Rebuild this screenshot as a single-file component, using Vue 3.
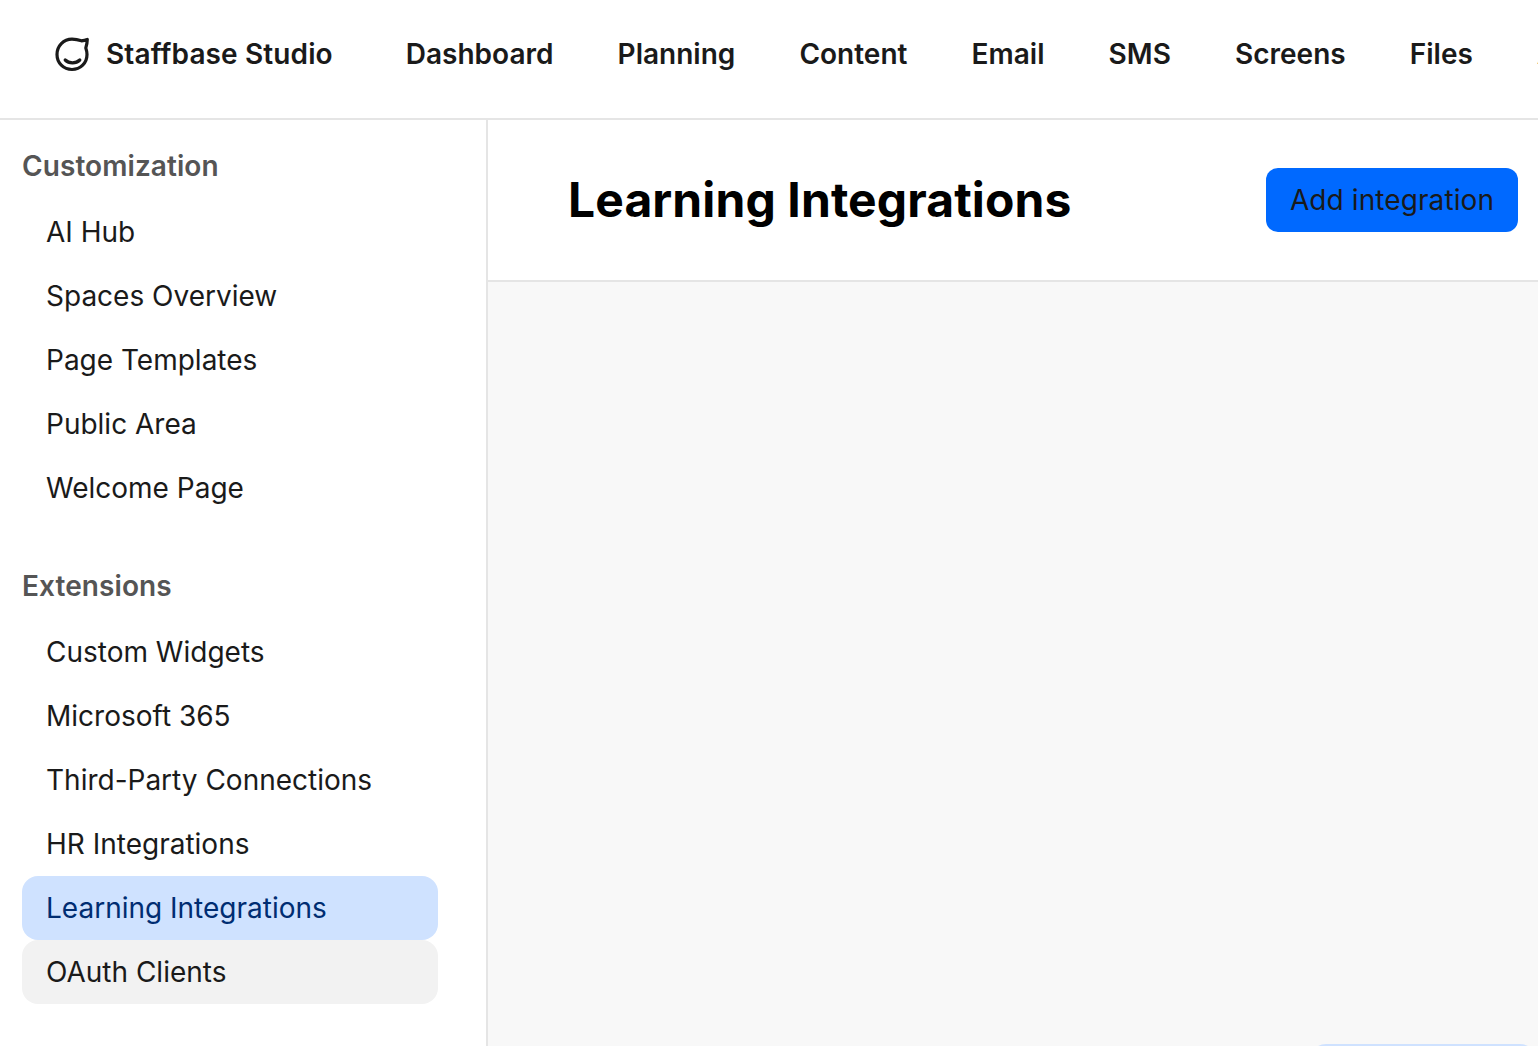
<script setup>
const nav = ['Dashboard', 'Planning', 'Content', 'Email', 'SMS', 'Screens', 'Files', 'Analytics']
const groups = [
  { title: 'Customization', items: ['AI Hub', 'Spaces Overview', 'Page Templates', 'Public Area', 'Welcome Page'] },
  { title: 'Extensions', items: ['Custom Widgets', 'Microsoft 365', 'Third-Party Connections', 'HR Integrations', 'Learning Integrations', 'OAuth Clients'] }
]
const itemClass = (name) => ({
  active: name === 'Learning Integrations',
  hover: name === 'OAuth Clients'
})
</script>

<template>
  <div class="page">
    <header class="topbar">
      <div class="brand">
        <svg class="logo" width="40" height="40" viewBox="0 0 40 40" fill="none" stroke="#1a1a1a" stroke-width="3.2" stroke-linecap="round" stroke-linejoin="round">
          <path d="M29.5 6.8C26.5 5.8 23.5 5.2 20 5.2C11.5 5.2 5 12 5 20.5C5 29 11.5 35.5 20 35.5C28.5 35.5 35 29 35 20.5C35 18 34.5 16 33.8 14C34.8 11 35.2 8.5 35.3 5.4C33.2 6.2 31.4 6.6 29.5 6.8Z" />
          <path d="M13.2 26C17 29.8 24 29.8 27.8 26" />
        </svg>
        <span class="brand-name">Staffbase Studio</span>
      </div>
      <nav class="nav">
        <a v-for="n in nav" :key="n" class="nav-item">{{ n }}</a>
      </nav>
    </header>
    <div class="body">
      <aside class="sidebar">
        <section v-for="g in groups" :key="g.title" class="group">
          <h3 class="group-title">{{ g.title }}</h3>
          <a v-for="i in g.items" :key="i" class="item" :class="itemClass(i)">{{ i }}</a>
        </section>
      </aside>
      <main class="main">
        <div class="head">
          <h1 class="title">Learning Integrations</h1>
          <button class="add" type="button">Add integration</button>
        </div>
        <div class="content">
          <div class="peek"></div>
        </div>
      </main>
    </div>
  </div>
</template>

<style>
html, body { margin: 0; height: 100%; overflow: hidden; background: #fff; }
</style>

<style scoped>
.page {
  height: 1046px;
  width: 1538px;
  display: flex;
  flex-direction: column;
  overflow: hidden;
  font-family: Inter, "Liberation Sans", sans-serif;
  color: #1a1a1a;
}
.topbar {
  box-sizing: border-box;
  height: 120px;
  flex: none;
  display: flex;
  align-items: center;
  padding: 0 0 10px 52px;
  border-bottom: 2px solid #e5e5e5;
  overflow: hidden;
  background: #fff;
}
.brand { display: flex; align-items: center; flex: none; }
.logo { flex: none; margin-right: 14px; }
.brand-name { font-size: 28px; font-weight: 600; white-space: nowrap; letter-spacing: 0.12px; }
.nav { display: flex; gap: 64.15px; margin-left: 73px; flex: none; }
.nav-item { font-size: 28px; font-weight: 600; white-space: nowrap; }
.body { flex: 1; display: flex; min-height: 0; }
.sidebar {
  box-sizing: border-box;
  width: 488px;
  flex: none;
  border-right: 2px solid #e5e5e5;
  padding: 26px 48px 0 22px;
  background: #fff;
}
.group { display: flex; flex-direction: column; }
.group + .group { margin-top: 46px; }
.group-title {
  margin: 0 0 14px;
  height: 40px;
  line-height: 40px;
  font-size: 28px;
  font-weight: 600;
  letter-spacing: 0.08px;
  color: #555;
}
.item {
  height: 64px;
  line-height: 64px;
  padding-left: 24px;
  border-radius: 16px;
  font-size: 28px;
  font-weight: 400;
  white-space: nowrap;
}
.item.active { background: #cfe2ff; color: #002d72; }
.item.hover { background: #f2f2f2; }
.main { flex: 1; min-width: 0; display: flex; flex-direction: column; background: #f8f8f8; }
.head {
  box-sizing: border-box;
  height: 162px;
  flex: none;
  display: flex;
  align-items: center;
  justify-content: space-between;
  padding: 0 20px 0 80px;
  background: #fff;
  border-bottom: 2px solid #e5e5e5;
}
.title { margin: 0 0 2px; font-size: 48px; font-weight: 700; letter-spacing: 0.1px; color: #000; white-space: nowrap; }
.add {
  box-sizing: border-box;
  width: 252px;
  height: 64px;
  border: 0;
  border-radius: 12px;
  background: #0069ff;
  color: #1a1a1a;
  font-family: inherit;
  font-size: 28px;
  font-weight: 400;
  letter-spacing: 0.1px;
}
.content { flex: 1; display: flex; justify-content: flex-end; padding: 762px 2px 0 0; overflow: hidden; }
.peek { width: 226px; height: 64px; flex: none; border-radius: 16px; background: #cfe2ff; }
</style>
